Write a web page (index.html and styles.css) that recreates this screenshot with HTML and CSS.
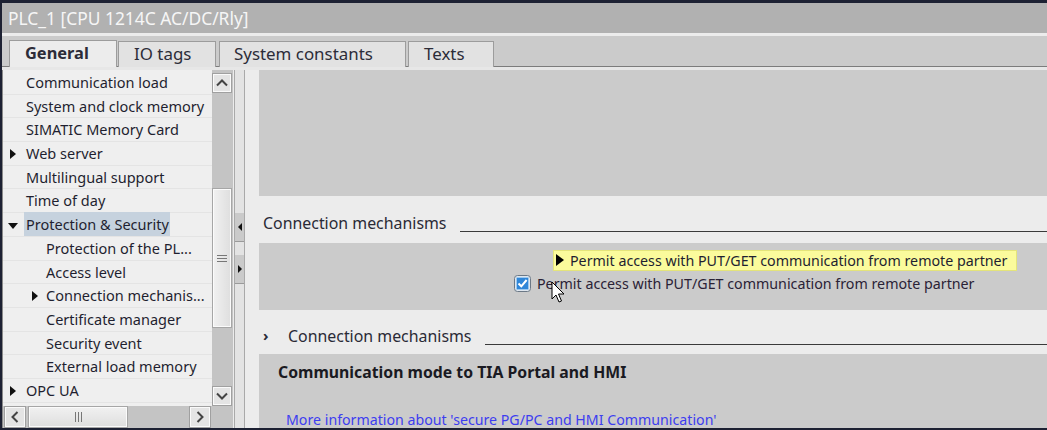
FILE: index.html
```html
<!DOCTYPE html>
<html lang="en">
<head>
  <meta charset="UTF-8" />
  <title>PLC_1 properties</title>
  <link rel="stylesheet" href="styles.css">
</head>
<body>
  <div class="window">
    <div class="titlebar">PLC_1 [CPU 1214C AC/DC/Rly]</div>

    <div class="tabstrip">
      <div class="tab active">General</div>
      <div class="tab">IO tags</div>
      <div class="tab">System constants</div>
      <div class="tab">Texts</div>
    </div>

    <div class="main">
      <!-- navigation tree with its scrollbars -->
      <div class="nav">
        <ul class="tree">
          <li class="row">Communication load</li>
          <li class="row">System and clock memory</li>
          <li class="row">SIMATIC Memory Card</li>
          <li class="row"><span class="twisty closed"></span>Web server</li>
          <li class="row">Multilingual support</li>
          <li class="row">Time of day</li>
          <li class="row"><span class="twisty open"></span><span class="selected">Protection &amp; Security</span></li>
          <li class="row sub">Protection of the PL...</li>
          <li class="row sub">Access level</li>
          <li class="row sub"><span class="twisty closed"></span>Connection mechanis...</li>
          <li class="row sub">Certificate manager</li>
          <li class="row sub">Security event</li>
          <li class="row sub">External load memory</li>
          <li class="row"><span class="twisty closed"></span>OPC UA</li>
        </ul>

        <div class="vscroll">
          <div class="sbtn">
            <svg width="12" height="8" viewBox="0 0 12 8"><path d="M1 6.5 L6 1.5 L11 6.5" fill="none" stroke="#444" stroke-width="2"/></svg>
          </div>
          <div class="track top"></div>
          <div class="thumb v"><span class="grip"></span></div>
          <div class="track"></div>
          <div class="sbtn">
            <svg width="12" height="8" viewBox="0 0 12 8"><path d="M1 1.5 L6 6.5 L11 1.5" fill="none" stroke="#444" stroke-width="2"/></svg>
          </div>
        </div>

        <div class="hscroll">
          <div class="sbtn">
            <svg width="8" height="12" viewBox="0 0 8 12"><path d="M6.5 1 L1.5 6 L6.5 11" fill="none" stroke="#444" stroke-width="2"/></svg>
          </div>
          <div class="thumb h"><span class="grip"></span></div>
          <div class="track"></div>
          <div class="sbtn">
            <svg width="8" height="12" viewBox="0 0 8 12"><path d="M1.5 1 L6.5 6 L1.5 11" fill="none" stroke="#444" stroke-width="2"/></svg>
          </div>
        </div>
        <div class="corner"></div>
      </div>

      <div class="splitter">
        <div class="split-btn left"></div>
        <div class="split-btn right"></div>
      </div>

      <!-- property pages -->
      <div class="content">
        <div class="panel first"></div>

        <div class="section">
          <span class="section-title">Connection mechanisms</span>
          <span class="rule"></span>
        </div>

        <div class="panel options">
          <div class="tooltip"><span class="tip-arrow"></span>Permit access with PUT/GET communication from remote partner</div>
          <label class="check-row">
            <svg class="checkbox" width="17" height="17" viewBox="0 0 17 17">
              <rect x="0.5" y="0.5" width="16" height="16" rx="3" fill="#dfe6ee" stroke="#6b7886"/>
              <rect x="2.5" y="2.5" width="12" height="12" rx="1" fill="#2f86d8" stroke="#9cc9f0"/>
              <path d="M4.5 8.5 L7.3 11.3 L12.6 5" fill="none" stroke="#fff" stroke-width="2"/>
            </svg>
            Permit access with PUT/GET communication from remote partner
          </label>
          <svg class="cursor" width="16" height="24" viewBox="0 0 16 24">
            <path d="M1 1 L1 18 L5 14 L8 21 L10.5 20 L7.5 13 L13 13 Z" fill="#fff" stroke="#000" stroke-width="1" stroke-linejoin="round"/>
          </svg>
        </div>

        <div class="section second">
          <span class="chevron">›</span>
          <span class="section-title">Connection mechanisms</span>
          <span class="rule"></span>
        </div>

        <div class="panel last">
          <div class="panel-title">Communication mode to TIA Portal and HMI</div>
          <a class="info-link" href="#">More information about 'secure PG/PC and HMI Communication'</a>
        </div>
      </div>
    </div>
  </div>
</body>
</html>
```

FILE: styles.css
```css
* {
  box-sizing: border-box;
  margin: 0;
  padding: 0;
}

body {
  background: #1d2133;
  font-family: 'Noto Sans', 'Open Sans', sans-serif;
  color: #1f1f30;
  overflow: hidden;
  height: 430px;
}

.window {
  margin: 3px 0 0 2px;
  height: 425px;
  background: #ececec;
  display: flex;
  flex-direction: column;
  overflow: hidden;
}

.titlebar {
  height: 30px;
  flex-shrink: 0;
  line-height: 30px;
  padding-left: 6px;
  background: #b1b1b1;
  color: #f6f6f6;
  font-size: 17.4px;
}

.tabstrip {
  height: 34px;
  flex-shrink: 0;
  border-top: 3px solid #ececec;
  border-bottom: 1px solid #7c7c7c;
  background: #cbcbcb;
  display: flex;
  align-items: flex-end;
  padding-left: 7px;
  gap: 1px;
}

.tab {
  height: 26px;
  padding-left: 15px;
  border: 1px solid #9c9c9c;
  border-bottom: none;
  background: #e2e2e2;
  font-size: 16.9px;
  line-height: 24px;
  color: #2c2c38;
  margin-bottom: -1px;
  white-space: nowrap;
}

.tab:nth-child(2) { width: 98px; }
.tab:nth-child(3) { width: 187px; margin-left: 2px; padding-left: 14px; }
.tab:nth-child(4) { width: 86px; margin-left: 1px; }

.tab.active {
  width: 108px;
  height: 27px;
  background: #ececec;
  font-weight: bold;
  font-size: 16.4px;
  margin-bottom: -1px;
  position: relative;
  z-index: 1;
}

.main {
  flex: 1;
  display: flex;
  border-top: 3px solid #e7e7e7;
  min-height: 0;
}

/* left navigation */
.nav {
  width: 231px;
  display: grid;
  grid-template-columns: 1fr 21px;
  grid-template-rows: 1fr 22px;
  background: #efefef;
  border-left: 1px solid #8a8a8a;
}

.tree {
  list-style: none;
  padding-top: 1px;
  overflow: hidden;
}

.row {
  height: 23.7px;
  line-height: 23px;
  border-bottom: 1px solid #e4e4e4;
  padding-left: 23px;
  font-size: 14.5px;
  white-space: nowrap;
  position: relative;
}

.row.sub {
  padding-left: 43px;
}

.twisty {
  position: absolute;
  top: 7px;
  left: 7px;
  width: 0;
  height: 0;
}

.row.sub .twisty {
  left: 29px;
}

.twisty.closed {
  border-top: 5px solid transparent;
  border-bottom: 5px solid transparent;
  border-left: 6px solid #111;
}

.twisty.open {
  top: 10px;
  left: 5px;
  border-left: 5px solid transparent;
  border-right: 5px solid transparent;
  border-top: 6px solid #111;
}

.selected {
  background: #c6d2de;
  padding: 2px 1px 2px 2px;
  margin-left: -2px;
}

.vscroll {
  display: flex;
  flex-direction: column;
  background: #c4c4c4;
  padding-top: 3px;
}

.hscroll {
  display: flex;
  background: #c4c4c4;
  padding: 0 1px 0 1px;
}

.corner {
  background: #c4c4c4;
}

.sbtn {
  width: 20px;
  height: 20px;
  background: #e4e4e4;
  border: 1px solid #a0a0a0;
  box-shadow: inset 0 0 0 1px #fafafa;
  display: flex;
  align-items: center;
  justify-content: center;
  flex-shrink: 0;
}

.hscroll .sbtn {
  width: 22px;
  height: 22px;
}

.track {
  flex: 1;
}

.vscroll .track.top {
  flex: 0 0 95px;
}

.thumb {
  background: linear-gradient(to right, #f1f1f1, #dedede);
  border: 1px solid #a6a6a6;
  box-shadow: inset 0 0 0 1px #fbfbfb;
  display: flex;
  align-items: center;
  justify-content: center;
  flex-shrink: 0;
}

.thumb.v {
  height: 140px;
  width: 20px;
}

.thumb.h {
  width: 100px;
  height: 22px;
  margin-left: 2px;
  background: linear-gradient(to bottom, #f1f1f1, #dedede);
}

.grip {
  width: 10px;
  height: 7px;
  border-top: 1px solid #777;
  border-bottom: 1px solid #777;
  background: linear-gradient(#777, #777) center / 100% 1px no-repeat;
}

.thumb.h .grip {
  width: 7px;
  height: 10px;
  border: none;
  border-left: 1px solid #777;
  border-right: 1px solid #777;
  background: linear-gradient(#777, #777) center / 1px 100% no-repeat;
}

/* splitter between tree and pages */
.splitter {
  width: 11px;
  margin-left: 1px;
  background: #e3e3e3;
  border-left: 1px solid #a9a9a9;
  border-right: 1px solid #a9a9a9;
  padding-top: 143px;
  display: flex;
  flex-direction: column;
  gap: 13px;
}

.split-btn {
  height: 29px;
  background: #cacaca;
  border-bottom: 1px solid #9a9a9a;
  display: flex;
  align-items: center;
  justify-content: center;
}

.split-btn::after {
  content: "";
  border-top: 4px solid transparent;
  border-bottom: 4px solid transparent;
}

.split-btn.left::after { border-right: 4px solid #111; }
.split-btn.right::after { border-left: 4px solid #111; }

/* property pages */
.content {
  flex: 1;
  display: flex;
  flex-direction: column;
  padding-left: 14px;
  min-width: 0;
}

.panel {
  background: #cbcbcb;
  flex-shrink: 0;
}

.panel.first {
  height: 126px;
}

.section {
  height: 47px;
  flex-shrink: 0;
  display: flex;
  align-items: center;
  padding-left: 4px;
  padding-top: 7px;
  font-size: 15.9px;
  color: #2a2a36;
}

.section.second {
  height: 44px;
  padding-top: 8px;
}

.chevron {
  width: 25px;
  font-weight: bold;
  font-size: 15px;
  margin-top: -2px;
}

.rule {
  flex: 1;
  height: 1px;
  background: #3a3a3a;
  margin: 16px 0 0 14px;
}

.panel.options {
  height: 67px;
  position: relative;
  padding: 31px 0 0 255px;
}

.tooltip {
  position: absolute;
  left: 294px;
  top: 7px;
  width: 464px;
  height: 21px;
  background: #fbfb9c;
  border: 1px solid #e4e47a;
  font-size: 14.25px;
  line-height: 19px;
  padding-left: 16px;
  white-space: nowrap;
}

.tip-arrow {
  position: absolute;
  left: 2px;
  top: 3px;
  border-top: 6px solid transparent;
  border-bottom: 6px solid transparent;
  border-left: 8px solid #000;
}

.check-row {
  display: flex;
  align-items: center;
  gap: 6px;
  font-size: 14.25px;
  color: #2a2236;
  white-space: nowrap;
}

.cursor {
  position: absolute;
  left: 292px;
  top: 38px;
}

.panel.last {
  flex: 1 1 0;
  min-height: 0;
  overflow: hidden;
  padding: 7px 0 0 19px;
}

.panel-title {
  font-weight: bold;
  font-size: 15.8px;
  color: #1a1a22;
}

.info-link {
  display: block;
  margin: 27px 0 0 8px;
  font-size: 14.2px;
  color: #3d3df0;
  text-decoration: none;
}
```
